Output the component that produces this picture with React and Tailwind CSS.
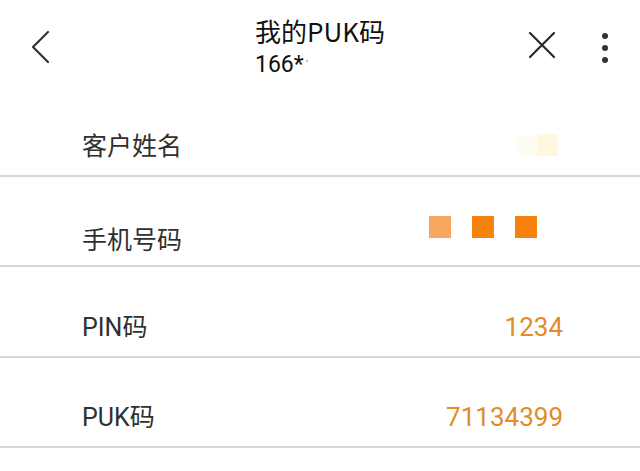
import React from "react";

const font = { fontFamily: '"Roboto", "Noto Sans CJK SC", sans-serif' };

function Row({ label, children, h = "h-[90px]" }) {
  return (
    <div className={`flex ${h} items-end justify-between border-b-2 border-[#d6d6d6] pb-[12px] pl-[82px] pr-[77px]`}>
      <span className="text-[25px] leading-[32px] text-[#2f2f2f]">{label}</span>
      {children}
    </div>
  );
}

export default function App() {
  return (
    <div className="h-[471px] w-[640px] overflow-hidden bg-white" style={font}>
      <div className="flex h-[87px] items-start">
        <div className="flex w-[112px] pl-[30px] pt-[30px]">
          <svg width="22" height="34" viewBox="0 0 22 34" fill="none">
            <path d="M18 2 L3 17 L18 32" stroke="#333" strokeWidth="2.2" strokeLinecap="round" strokeLinejoin="round" />
          </svg>
        </div>
        <div className="flex flex-1 flex-col items-center pt-[13px]">
          <div className="flex flex-col items-start">
            <div className="text-[26px] leading-[36px] text-[#111]" style={{ fontFamily: '"Noto Sans CJK SC", sans-serif' }}>我的PUK码</div>
            <div className="flex items-center pt-[2px] text-[23px] leading-[28px] text-[#111]" style={{ fontFamily: '"Liberation Sans Narrow", "Roboto", sans-serif' }}>
              <span>166*</span>
              <span className="ml-[2px] mb-[8px] h-[2px] w-[2px] bg-[#bbb]"></span>
            </div>
          </div>
        </div>
        <div className="flex w-[112px] items-start justify-end gap-[46px] pr-[32px] pt-[31px]">
          <svg width="28" height="28" viewBox="0 0 28 28" fill="none">
            <path d="M2 2 L26 26 M26 2 L2 26" stroke="#2a2a2a" strokeWidth="2.2" strokeLinecap="round" />
          </svg>
          <div className="flex flex-col items-center gap-[6px] pt-[2px]">
            <span className="h-[6px] w-[6px] rounded-full bg-[#333]"></span>
            <span className="h-[6px] w-[6px] rounded-full bg-[#333]"></span>
            <span className="h-[6px] w-[6px] rounded-full bg-[#333]"></span>
          </div>
        </div>
      </div>

      <Row label="客户姓名">
        <div className="mb-[7px] mr-[5px] flex items-center">
          <span className="h-[21px] w-[20px] bg-[#fffdf3]"></span>
          <span className="h-[22px] w-[21px] bg-[#fff8de]"></span>
        </div>
      </Row>
      <div className="flex h-[90px] items-stretch justify-between border-b-2 border-[#d6d6d6] pb-[8px] pl-[82px] pr-[103px]">
        <span className="self-end text-[25px] leading-[32px] text-[#2f2f2f]">手机号码</span>
        <div className="mt-[39px] flex gap-[21px] self-start">
          <span className="h-[22px] w-[22px] bg-[#f9a65e]"></span>
          <span className="h-[22px] w-[22px] bg-[#f7820e]"></span>
          <span className="h-[22px] w-[22px] bg-[#f7820e]"></span>
        </div>
      </div>
      <Row label="PIN码" h="h-[91px]">
        <span className="mb-[1px] text-[26px] leading-[32px] text-[#e28b27]" style={{ fontFamily: '"Roboto", sans-serif' }}>1234</span>
      </Row>
      <Row label="PUK码">
        <span className="mb-[1px] text-[26px] leading-[32px] text-[#e28b27]" style={{ fontFamily: '"Roboto", sans-serif' }}>71134399</span>
      </Row>
    </div>
  );
}
